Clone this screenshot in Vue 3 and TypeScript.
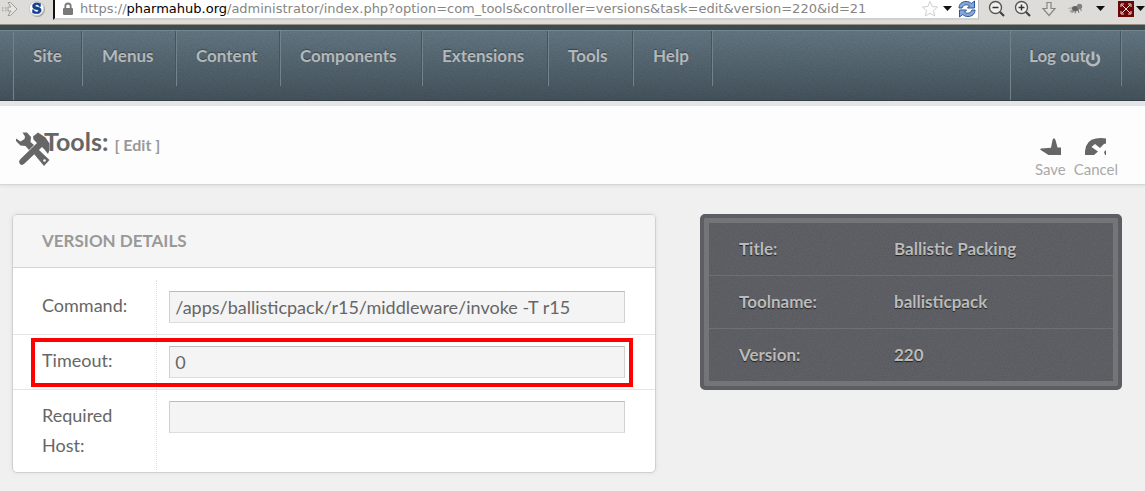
<script setup lang="ts">
import { ref } from 'vue'

interface Detail {
  label: string
  value: string
}

const menu: string[] = ['Site', 'Menus', 'Content', 'Components', 'Extensions', 'Tools', 'Help']

const details: Detail[] = [
  { label: 'Title:', value: 'Ballistic Packing' },
  { label: 'Toolname:', value: 'ballisticpack' },
  { label: 'Version:', value: '220' },
]

const command = ref('/apps/ballisticpack/r15/middleware/invoke -T r15')
const timeout = ref('0')
const host = ref('')
</script>

<template>
  <div class="page">
    <div class="browser">
      <div class="extensions">
        <svg class="fast" width="16" height="18" viewBox="0 0 16 18" aria-hidden="true">
          <path d="M0 8h1.500M3 8h1.500M0 10.500h1.500M3 10.500h1.500" stroke="#aaa9a5" stroke-width="1.500" />
          <path d="M6 2.500h2.500l6.500 6.500-6.500 6.500H6l3-4.500H6V7h3z" fill="#e6e5e1" stroke="#9d9c98" />
        </svg>
        <svg width="18" height="18" viewBox="0 0 18 18" aria-hidden="true">
          <circle cx="9.500" cy="9.500" r="7.500" fill="#a5a5a5" />
          <circle cx="8.500" cy="8.500" r="7.200" fill="#fff" stroke="#c9c9c9" />
          <path d="M12.500 3.500v3h-1c-.6-1.200-1.600-1.800-2.800-1.800-1 0-1.500.4-1.500 1 0 .8.900 1 2.300 1.300 2 .4 3.700 1 3.700 3.200 0 2.200-1.700 3.500-4.400 3.500-1.500 0-3-.3-4.300-.9v-3h1.100c.6 1.400 1.700 2.100 3.200 2.100 1 0 1.700-.4 1.700-1.100 0-.8-.8-1-2.500-1.300C6 9 4.500 8.400 4.500 6.200 4.500 4 6.200 2.800 8.500 2.800c1.400 0 2.800.2 4 .7z" fill="#123e8b" stroke="#123e8b" stroke-width=".5" />
        </svg>
      </div>
      <div class="address">
        <svg width="12" height="14" viewBox="0 0 12 14" aria-hidden="true">
          <path d="M3.300 6V4.200a2.700 2.700 0 0 1 5.400 0V6" fill="none" stroke="#7a7a7a" stroke-width="1.800" />
          <rect x="1" y="6" width="10" height="7" rx="1" fill="#787878" />
        </svg>
        <p class="url">https://<b>pharmahub.org</b>/administrator/index.php?option=com_tools&amp;controller=versions&amp;task=edit&amp;version=220&amp;id=21</p>
        <svg class="star" width="18" height="18" viewBox="0 0 18 18" aria-hidden="true">
          <path d="M9 1.500l2.200 5 5.300.5-4 3.600 1.200 5.400L9 13.200 4.300 16l1.200-5.400-4-3.600 5.300-.5z" fill="#fff" stroke="#cfcfcf" />
        </svg>
        <svg width="10" height="6" viewBox="0 0 10 6" aria-hidden="true"><path d="M0 0h9L4.500 5z" fill="#111" /></svg>
        <svg class="reload" width="18" height="18" viewBox="0 0 18 18" aria-hidden="true">
          <path d="M1 8c0-4 3-6.500 7-6.500 2.500 0 4 .8 5.300 2L16.500 1v7H9.500l2-2.200C8.500 4 5.500 4.500 4 8z" fill="#86a8d8" stroke="#2c559b" />
          <path d="M17 10c0 4-3 6.500-7 6.500-2.500 0-4-.8-5.300-2L1.500 17v-7h7l-2 2.200c3 1.800 6 1.300 7.500-2.200z" fill="#86a8d8" stroke="#2c559b" />
        </svg>
      </div>
      <div class="tools">
        <svg width="18" height="18" viewBox="0 0 18 18" aria-hidden="true">
          <circle cx="7.500" cy="7.500" r="6" fill="#f0f0ee" stroke="#555753" stroke-width="1.400" />
          <path d="M4.500 7.500h6" stroke="#333" stroke-width="1.500" /><path d="M12 12l4 4" stroke="#3d4146" stroke-width="2.200" />
        </svg>
        <svg width="18" height="18" viewBox="0 0 18 18" aria-hidden="true">
          <circle cx="7.500" cy="7.500" r="6" fill="#f0f0ee" stroke="#555753" stroke-width="1.400" />
          <path d="M4.500 7.500h6M7.500 4.500v6" stroke="#333" stroke-width="1.500" /><path d="M12 12l4 4" stroke="#3d4146" stroke-width="2.200" />
        </svg>
        <svg width="18" height="18" viewBox="0 0 18 18" aria-hidden="true">
          <path d="M7 2.500h4v6h4L9 15.500 3 8.500h4z" fill="#e0e0de" stroke="#858782" stroke-width="1.200" />
        </svg>
        <svg width="18" height="18" viewBox="0 0 18 18" aria-hidden="true">
          <path d="M1 8.500L8 6l1 4z" fill="#b9b8b5" /><path d="M3 11l6-3 2 3-5 2z" fill="#aaa9a6" />
          <path d="M6 12.500l2-2M9 13.500l1-3M13 13l-1-3M14 9.500l2 1" stroke="#777" />
          <ellipse cx="9.500" cy="8.500" rx="3.500" ry="2.500" fill="#62615f" /><circle cx="13.500" cy="6.500" r="2.700" fill="#83817f" />
        </svg>
        <svg width="18" height="18" viewBox="0 0 18 18" aria-hidden="true"><path d="M4 6h9L8.500 11z" fill="#111" /></svg>
        <svg class="full" width="27" height="18" viewBox="0 0 27 18" aria-hidden="true">
          <rect x="0" y="1" width="16" height="16" fill="#6e0505" />
          <path d="M4 5l8 8M12 5l-8 8M3 7V4h3M10 4h3v3M13 11v3h-3M6 14H3v-3" fill="none" stroke="#f3dede" />
          <path d="M18 6h9l-4.500 5z" fill="#111" />
        </svg>
      </div>
    </div>

    <nav class="nav">
      <ul class="menu">
        <li v-for="item in menu" :key="item"><a href="#">{{ item }}</a></li>
      </ul>
      <div class="session">
        <a href="#">Log out<svg class="power" width="16" height="17" viewBox="0 0 16 17" aria-hidden="true">
          <path d="M4.300 3.600a6 6 0 1 0 7.400 0" fill="none" stroke="#b4b8bb" stroke-width="2.600" />
          <path d="M8 .5v8.500" stroke="#b4b8bb" stroke-width="2.800" />
        </svg></a>
      </div>
    </nav>

    <header class="heading">
      <svg class="hammer" width="34" height="34" viewBox="0 0 34 34" aria-hidden="true">
        <path d="M6.500.5H11l4 4.500-.5 5 3.500 3-5 5-3.500-4-5-.5L0 9V6.500l4.500 3 4-2.500.5-2.500z" fill="#666" />
        <path d="M17 4.500L22 .5l7.500 5 4 6V18l-1.500 4-3.500-4.500-2.500-2.500L8.500 31.500q-2.500 2.500-4.500.5-2-2.500.5-5L21 11l-3.500-3.500z" fill="#666" />
        <path d="M18 22l4.500-4.500 11 10.500-5.500 6z" fill="#666" />
        <circle cx="28.500" cy="28.500" r="1.300" fill="#fff" />
      </svg>
      <h1>Tools: <small>[ Edit ]</small></h1>
      <div class="actions">
        <button type="button">
          <svg width="21" height="17" viewBox="0 0 21 17" aria-hidden="true"><path d="M0 11.500l1-1 10-.7L12.500 2q1.500-3.500 3 0l2 7.500H21V17H8.500z" fill="#666" /></svg>
          <span>Save</span>
        </button>
        <button type="button">
          <svg width="21" height="17" viewBox="0 0 21 17" aria-hidden="true">
            <path d="M0 17v-4Q1 2 11 .5q5-1 10 0V17z" fill="#666" />
            <path d="M6.500 9L10 6l5 4 4-4 2-.5V12l-2 2 1 3H9l4-3.500z" fill="#fff" />
          </svg>
          <span>Cancel</span>
        </button>
      </div>
    </header>

    <main class="content">
      <section class="panel">
        <h2>VERSION DETAILS</h2>
        <table>
          <tbody>
            <tr>
              <th scope="row"><label for="command">Command:</label></th>
              <td><input id="command" v-model="command" type="text" /></td>
            </tr>
            <tr class="marked">
              <th scope="row"><label for="timeout">Timeout:</label><span class="marker" /></th>
              <td><input id="timeout" v-model="timeout" type="text" /></td>
            </tr>
            <tr>
              <th scope="row"><label for="host">Required Host:</label></th>
              <td><input id="host" v-model="host" type="text" /></td>
            </tr>
          </tbody>
        </table>
      </section>

      <table class="summary">
        <tbody>
          <tr v-for="row in details" :key="row.label">
            <th scope="row">{{ row.label }}</th>
            <td>{{ row.value }}</td>
          </tr>
        </tbody>
      </table>
    </main>
  </div>
</template>

<style>
body {
  margin: 0;
  background: #f0f0f0;
}
</style>

<style scoped>
.page {
  --grain: url("data:image/svg+xml,%3Csvg xmlns='http://www.w3.org/2000/svg' width='120' height='120'%3E%3Cfilter id='n'%3E%3CfeTurbulence type='fractalNoise' baseFrequency='.7' numOctaves='2' stitchTiles='stitch'/%3E%3CfeColorMatrix values='0 0 0 0 0 0 0 0 0 0 0 0 0 0 0 .5 0 0 0 -.17'/%3E%3C/filter%3E%3Crect width='120' height='120' filter='url(%23n)' opacity='.35'/%3E%3C/svg%3E");
  font-family: Lato, "Open Sans", sans-serif;
  color: #666;
  box-sizing: border-box;
  min-height: 100vh;
}

svg {
  display: block;
  flex: none;
}

.browser {
  display: flex;
  height: 24px;
  background: #dedcd8;
  border-bottom: 1px solid #9b8f82;
}

.extensions {
  display: flex;
  gap: 10px;
  width: 53px;
  box-sizing: border-box;
  padding-left: 2px;
}

.address {
  display: flex;
  align-items: center;
  flex: 1;
  height: 18px;
  padding: 0 2px 0 7px;
  background: #fff;
  border-left: 2px solid #111;
  border-right: 1px solid #bbb;
  border-bottom: 2px solid #d0d0d0;
}

.url {
  flex: 1;
  margin: 0 0 0 6px;
  font: 13px/18px "DejaVu Sans", sans-serif;
  color: #858585;
  white-space: nowrap;
}

.url b {
  font-weight: 400;
  color: #000;
}

.star {
  margin-right: 4px;
}

.reload {
  margin-left: 5px;
}

.tools {
  display: flex;
  gap: 8px;
  padding-left: 9px;
}

.nav {
  display: flex;
  justify-content: space-between;
  height: 69px;
  padding: 0 23px 0 13px;
  background: var(--grain), linear-gradient(#627682, #44525b);
  border-top: 1px solid #74858d;
  border-bottom: 1px solid #333e46;
  box-shadow: 0 -5px #3b4b52, 0 5px #e5e4e6;
  margin-top: 5px;
}

.menu {
  display: grid;
  grid-template-columns: 69px 94px 104px 142px 126px 85px 79px;
  margin: 0;
  padding: 0;
  list-style: none;
  border-left: 1px solid #73838c;
}

.nav a {
  display: block;
  height: 55px;
  padding-left: 19px;
  border-right: 1px solid #73838c;
  box-shadow: inset -1px 0 #46545d;
  box-sizing: border-box;
  font-size: 17px;
  font-weight: 700;
  line-height: 50px;
  color: #b4b8bb;
  text-decoration: none;
  text-shadow: 0 -1px 1px #39454c;
}

.session {
  width: 111px;
  border-left: 1px solid #73838c;
}

.session a {
  position: relative;
  padding-left: 18px;
}

.power {
  position: absolute;
  right: 20px;
  top: 20px;
}

.heading {
  display: flex;
  align-items: center;
  height: 78px;
  margin-top: 5px;
  padding: 0 27px 0 16px;
  background: #fdfdfd;
  border-bottom: 1px solid #d6d8d7;
  box-shadow: 0 1px 3px #ddd;
}

.hammer {
  margin-top: 8px;
}

h1 {
  flex: 1;
  margin: 0 0 4px -6px;
  font-size: 25px;
  font-weight: 700;
  line-height: 30px;
}

small {
  font-size: 16px;
  color: #999;
}

.actions {
  display: flex;
  gap: 8px;
  margin-top: 26px;
}

button {
  display: flex;
  flex-direction: column;
  align-items: center;
  gap: 4px;
  padding: 0;
  border: 0;
  background: none;
  font: 15px/20px Lato, sans-serif;
  color: #aaa;
}

.content {
  display: grid;
  grid-template-columns: 644fr 422fr;
  align-items: start;
  gap: 44px;
  padding: 29px 23px 18px 12px;
}

.panel {
  padding-bottom: 2px;
  border: 1px solid #d0d0d0;
  border-radius: 5px;
  background: #fff;
  box-shadow: 0 0 4px #ddd;
  overflow: hidden;
}

h2 {
  margin: 0 0 12px;
  padding: 0 29px;
  background: #f5f5f5;
  border-bottom: 1px solid #d5d5d5;
  font-size: 17px;
  font-weight: 700;
  line-height: 52px;
  color: #999;
}

table {
  width: 100%;
  border-collapse: separate;
  border-spacing: 0;
  text-align: left;
}

.panel th {
  width: 143px;
  box-sizing: border-box;
  padding: 10px 29px;
  border-right: 1px dotted #ddd;
  font-size: 18px;
  font-weight: 400;
  line-height: 30px;
  vertical-align: top;
}

.panel td {
  padding: 11px 30px 11px 12px;
  vertical-align: top;
}

.panel tr + tr > * {
  border-top: 1px solid #e5e5e5;
}

.panel input {
  display: block;
  width: 100%;
  height: 32px;
  box-sizing: border-box;
  padding: 0 5px;
  border: 1px solid #d0d0d0;
  border-top-color: #bbb;
  border-bottom-color: #ddd;
  background: #f4f4f4;
  font: 18px/28px Lato, sans-serif;
  color: #666;
  outline: 0;
}

.marked {
  position: relative;
}

.marker {
  position: absolute;
  inset: 4px 22px 2px 18px;
  border: 4px solid #f00;
  pointer-events: none;
}

.summary {
  border: 4px solid #5d5e63;
  border-radius: 5px;
  background: var(--grain), #606166;
  box-shadow: inset 0 0 0 5px #747579;
  padding: 5px;
}

.summary th,
.summary td {
  height: 50px;
  padding: 0 0 2px;
  font-size: 17px;
  font-weight: 700;
  color: #bbb;
  text-shadow: 0 1px 1px #222;
}

.summary th {
  width: 155px;
  padding-left: 30px;
}

.summary tr + tr > * {
  border-top: 1px solid #6d6f74;
}
</style>
